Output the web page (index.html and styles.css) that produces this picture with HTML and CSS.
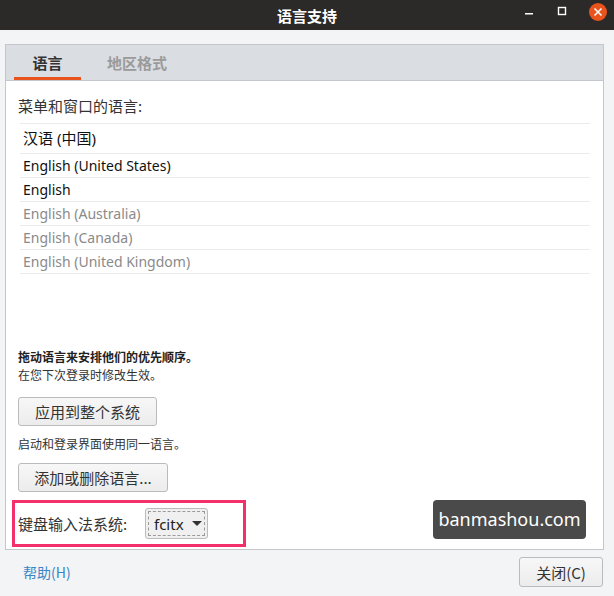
FILE: index.html
```html
<!DOCTYPE html>
<html lang="zh-CN">
<head>
    <meta charset="UTF-8">
    <title>语言支持</title>
    <link rel="stylesheet" href="styles.css">
</head>
<body>
    <div class="window">
        <!-- Title bar -->
        <div class="titlebar">
            <span class="title">语言支持</span>
            <div class="controls">
                <svg class="ctl" width="14" height="14" viewBox="0 0 14 14"><rect x="3" y="8" width="8" height="1.5" fill="#fff"/></svg>
                <svg class="ctl" width="14" height="14" viewBox="0 0 14 14"><rect x="3.5" y="2.5" width="7" height="7" fill="none" stroke="#fff" stroke-width="1.4"/></svg>
                <svg class="ctl close" width="20" height="20" viewBox="0 0 20 20">
                    <circle cx="10" cy="10" r="9" fill="#e9531d"/>
                    <path d="M6.5 6.5 L13.5 13.5 M13.5 6.5 L6.5 13.5" stroke="#fff" stroke-width="1.5"/>
                </svg>
            </div>
        </div>

        <div class="main">
            <div class="frame">
                <div class="tabs">
                    <div class="tab active">语言</div>
                    <div class="tab">地区格式</div>
                </div>

                <div class="content">
                    <div class="label">菜单和窗口的语言:</div>
                    <div class="list-wrap">
                        <ul class="lang-list">
                            <li class="first">汉语 (中国)</li>
                            <li>English (United States)</li>
                            <li>English</li>
                            <li class="dim">English (Australia)</li>
                            <li class="dim">English (Canada)</li>
                            <li class="dim">English (United Kingdom)</li>
                        </ul>
                    </div>

                    <div class="note bold">拖动语言来安排他们的优先顺序。</div>
                    <div class="note">在您下次登录时修改生效。</div>
                    <button class="btn btn-apply">应用到整个系统</button>
                    <div class="note note-gap">启动和登录界面使用同一语言。</div>
                    <button class="btn btn-add">添加或删除语言...</button>

                    <div class="im-row">
                        <span class="im-label">键盘输入法系统:</span>
                        <div class="combo">
                            <div class="combo-inner">
                                <span>fcitx</span>
                                <svg width="10" height="6" viewBox="0 0 10 6"><path d="M0 0 L10 0 L5 5 Z" fill="#333"/></svg>
                            </div>
                        </div>
                    </div>

                    <div class="watermark">banmashou.com</div>
                </div>
            </div>

            <div class="footer">
                <a class="help">帮助(H)</a>
                <button class="btn btn-close">关闭(C)</button>
            </div>
        </div>
    </div>
</body>
</html>
```

FILE: styles.css
```css
/* Language support dialog */

body {
    margin: 0;
    font-family: "Noto Sans", "Noto Sans CJK SC", sans-serif;
    color: #222;
    background: #f3f4f6;
}

.window {
    width: 614px;
    height: 596px;
    display: flex;
    flex-direction: column;
}

.titlebar {
    height: 30px;
    background: #2b2a28;
    position: relative;
    display: flex;
    align-items: center;
    justify-content: center;
}

.title {
    color: #fff;
    font-size: 15px;
    font-weight: bold;
    font-family: "Noto Sans CJK SC", sans-serif;
}

.controls {
    position: absolute;
    right: 6px;
    top: 2px;
    display: flex;
    align-items: center;
    gap: 19px;
}

.main {
    flex: 1;
    padding: 14px 10px 0 5px;
    display: flex;
    flex-direction: column;
}

.frame {
    border: 1px solid #c3c6ca;
    background: #fff;
}

.tabs {
    height: 35px;
    background: #dadde1;
    border-bottom: 1px solid #c3c6ca;
    display: flex;
    padding-left: 8px;
}

.tab {
    font-family: "Noto Sans CJK SC", sans-serif;
    font-size: 15px;
    font-weight: bold;
    color: #9a9a9a;
    padding: 0 13px;
    line-height: 35px;
    box-sizing: border-box;
    height: 35px;
}

.tab + .tab {
    margin-left: 13px;
}

.tab.active {
    color: #333;
    width: 67px;
    text-align: center;
    border-bottom: 3px solid #e9531d;
    line-height: 35px;
}

.content {
    position: relative;
    padding: 15px 0 2px 12px;
}

.label {
    font-family: "Noto Sans CJK SC", sans-serif;
    font-size: 15px;
    line-height: 20px;
    color: #333;
}

.list-wrap {
    height: 225px;
    margin-top: 7px;
    margin-left: 2px;
    margin-right: 13px;
}

.lang-list {
    list-style: none;
    margin: 0;
    padding: 0;
    border-top: 1px solid #ebebeb;
}

.lang-list li {
    height: 23px;
    line-height: 23px;
    padding-left: 3px;
    font-size: 14px;
    border-bottom: 1px solid #ebebeb;
    color: #111;
}

.lang-list li.first {
    height: 29px;
    line-height: 29px;
    font-size: 15px;
}

.lang-list li.dim {
    color: #8a8a8a;
}

.note {
    font-family: "Noto Sans CJK SC", sans-serif;
    font-size: 12px;
    line-height: 18px;
    color: #333;
}

.note.bold {
    font-weight: bold;
    color: #222;
}

.note-gap {
    margin-top: 9px;
}

.btn {
    display: block;
    font-family: "Noto Sans CJK SC", sans-serif;
    font-size: 15px;
    color: #333;
    background: linear-gradient(#f7f7f7, #ececec);
    border: 1px solid #b9bcbf;
    border-radius: 3px;
    height: 29px;
    padding: 0;
}

.btn-apply {
    width: 139px;
    margin-top: 13px;
}

.btn-add {
    width: 150px;
    margin-top: 10px;
}

.im-row {
    margin: 8px 0 0 -6px;
    width: 225px;
    height: 41px;
    border: 3px solid #f4306c;
    display: flex;
    align-items: center;
    padding-left: 3px;
}

.im-label {
    font-family: "Noto Sans CJK SC", sans-serif;
    font-size: 15px;
    color: #333;
    width: 127px;
}

.combo {
    height: 31px;
    width: 63px;
    border: 1px solid #b9bcbf;
    border-radius: 3px;
    background: #f0f0f0;
    padding: 2px;
    box-sizing: border-box;
}

.combo-inner {
    height: 100%;
    border: 1px dashed #9a9a9a;
    box-sizing: border-box;
    display: flex;
    align-items: center;
    padding-left: 5px;
    gap: 8px;
    font-size: 15px;
    color: #222;
}

.watermark {
    position: absolute;
    right: 17px;
    bottom: 10px;
    background: #4a4a4a;
    color: #fff;
    font-size: 18px;
    border-radius: 4px;
    height: 39px;
    line-height: 39px;
    width: 153px;
    text-align: center;
}

.footer {
    flex: 1;
    display: flex;
    align-items: center;
    justify-content: space-between;
    padding-left: 18px;
    padding-bottom: 2px;
}

.help {
    font-family: "Noto Sans CJK SC", sans-serif;
    font-size: 14px;
    color: #3a85c6;
}

.btn-close {
    width: 84px;
    height: 30px;
    margin-right: 1px;
}
```
